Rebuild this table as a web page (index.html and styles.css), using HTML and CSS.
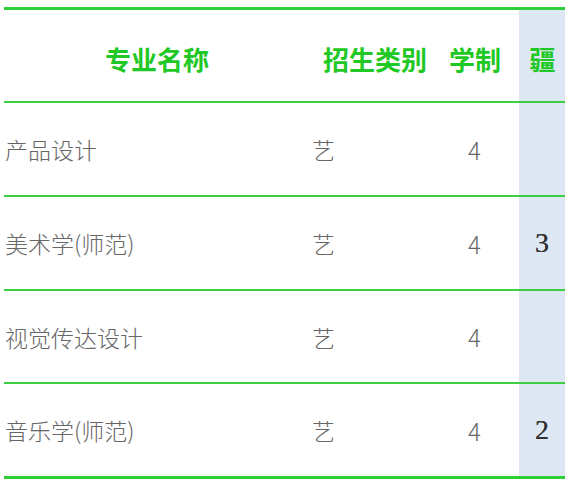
FILE: index.html
```html
<!DOCTYPE html>
<html lang="zh">
<head>
<meta charset="utf-8">
<link rel="stylesheet" href="styles.css">
</head>
<body>
<div class="table">
  <div class="row head">
    <div class="c1">专业名称</div>
    <div class="c2">招生类别</div>
    <div class="c3">学制</div>
    <div class="c4">疆</div>
  </div>
  <div class="row body">
    <div class="c1">产品设计</div>
    <div class="c2">艺</div>
    <div class="c3">4</div>
    <div class="c4"></div>
  </div>
  <div class="row body">
    <div class="c1">美术学(师范)</div>
    <div class="c2">艺</div>
    <div class="c3">4</div>
    <div class="c4"><span class="num">3</span></div>
  </div>
  <div class="row body short">
    <div class="c1">视觉传达设计</div>
    <div class="c2">艺</div>
    <div class="c3">4</div>
    <div class="c4"></div>
  </div>
  <div class="row body last">
    <div class="c1">音乐学(师范)</div>
    <div class="c2">艺</div>
    <div class="c3">4</div>
    <div class="c4"><span class="num">2</span></div>
  </div>
</div>
</body>
</html>
```

FILE: styles.css
```css
html, body {
  margin: 0;
  padding: 0;
  background: #ffffff;
}
body {
  padding: 7px 0 0 4px;
  font-family: "Noto Sans CJK SC", "Noto Sans", sans-serif;
}
.table {
  width: 561px;
  border-top: 3px solid #2fcf3a;
}
.row {
  display: grid;
  grid-template-columns: 306px 121px 88px 46px;
  border-bottom: 2px solid #3ccf45;
  box-sizing: border-box;
}
.row > div {
  display: flex;
  align-items: center;
}
.head {
  height: 93px;
}
.head > div {
  justify-content: center;
  padding-top: 6px;
  font-size: 26px;
  font-weight: 700;
  color: #1fc824;
}
.head .c2 {
  padding-left: 9px;
}
.head .c4 {
  padding-left: 1px;
}
.body {
  height: 94px;
}
.body.short {
  height: 93px;
}
.body > div {
  font-size: 23px;
  font-weight: 300;
  color: #666666;
}
.body .c1 {
  padding-left: 1px;
}
.body .c2 {
  padding-left: 2px;
}
.body .c3 {
  justify-content: center;
  padding-right: 1px;
  font-size: 24px;
}
.c4 {
  background: #dde8f4;
}
.body .c4 {
  justify-content: center;
}
.body.last {
  height: 95px;
  border-bottom: 3px solid #2fcf3a;
}
.num {
  font-family: "Liberation Serif", serif;
  font-size: 28px;
  color: #333333;
  font-weight: 400;
  text-shadow: 0 0 0.4px #333333;
}
```
